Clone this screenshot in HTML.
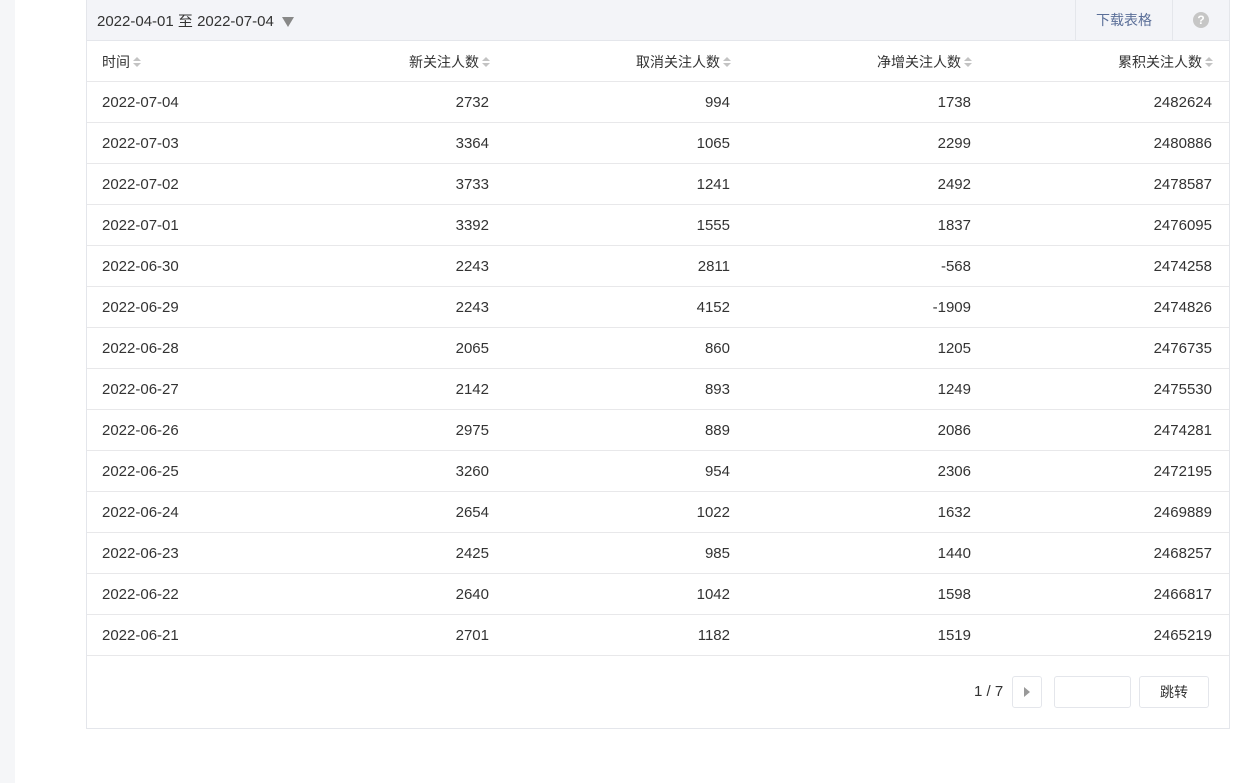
<!DOCTYPE html>
<html><head><meta charset="utf-8"><style>
*{margin:0;padding:0;box-sizing:border-box}
body{width:1257px;height:783px;background:#fff;font-family:"Liberation Sans","Noto Sans CJK SC",sans-serif;font-size:14px;color:#333;position:relative;overflow:hidden}
.strip{position:absolute;left:0;top:0;width:15px;height:783px;background:#f5f6f8}
.box{position:absolute;left:86px;top:0;width:1144px;height:729px;border:1px solid #e4e6eb;border-top:none}
.bar{height:41px;background:#f3f4f8;border-bottom:1px solid #e4e6eb;position:relative}
.date{position:absolute;left:10px;top:10px;font-size:15px;color:#333}
.tri{display:inline-block;width:0;height:0;border-left:6px solid transparent;border-right:6px solid transparent;border-top:10px solid #888;margin-left:8px;vertical-align:-1px}
.dl{position:absolute;left:988px;top:0;width:98px;height:40px;border-left:1px solid #e4e6eb;border-right:1px solid #e4e6eb;text-align:center;line-height:40px;color:#5a6e98;font-size:14px}
.q{position:absolute;left:1106px;top:12px;width:16px;height:16px;border-radius:50%;background:#c6c6c6;color:#fff;font-size:12px;font-weight:bold;text-align:center;line-height:16px}
table{border-collapse:collapse;width:1142px;table-layout:fixed}
td,th{height:41px;border-bottom:1px solid #e8e8ea;text-align:right;padding:2px 17px 0 0;font-weight:normal;font-size:15px;color:#333}
th{font-size:14px;height:40px;padding-right:16px}
td:first-child,th:first-child{text-align:left;padding-left:15px}
.s{display:inline-block;width:8px;height:11px;position:relative;margin-left:3px;vertical-align:-1px}
.s:before{content:"";position:absolute;left:0;top:0;border-left:4px solid transparent;border-right:4px solid transparent;border-bottom:4px solid #c3c3c3}
.s:after{content:"";position:absolute;left:0;top:6px;border-left:4px solid transparent;border-right:4px solid transparent;border-top:4px solid #c3c3c3}
.pg{position:absolute;top:676px;height:32px}
</style></head><body>
<div class="strip"></div>
<div class="box">
<div class="bar"><span class="date">2022-04-01 至 2022-07-04<span class="tri"></span></span><div class="dl">下载表格</div><div class="q">?</div></div>
<table>
<colgroup><col style="width:178px"><col style="width:241px"><col style="width:241px"><col style="width:241px"><col style="width:241px"></colgroup>
<tr><th>时间<span class="s"></span></th><th>新关注人数<span class="s"></span></th><th>取消关注人数<span class="s"></span></th><th>净增关注人数<span class="s"></span></th><th>累积关注人数<span class="s"></span></th></tr>
<tr><td>2022-07-04</td><td>2732</td><td>994</td><td>1738</td><td>2482624</td></tr>
<tr><td>2022-07-03</td><td>3364</td><td>1065</td><td>2299</td><td>2480886</td></tr>
<tr><td>2022-07-02</td><td>3733</td><td>1241</td><td>2492</td><td>2478587</td></tr>
<tr><td>2022-07-01</td><td>3392</td><td>1555</td><td>1837</td><td>2476095</td></tr>
<tr><td>2022-06-30</td><td>2243</td><td>2811</td><td>-568</td><td>2474258</td></tr>
<tr><td>2022-06-29</td><td>2243</td><td>4152</td><td>-1909</td><td>2474826</td></tr>
<tr><td>2022-06-28</td><td>2065</td><td>860</td><td>1205</td><td>2476735</td></tr>
<tr><td>2022-06-27</td><td>2142</td><td>893</td><td>1249</td><td>2475530</td></tr>
<tr><td>2022-06-26</td><td>2975</td><td>889</td><td>2086</td><td>2474281</td></tr>
<tr><td>2022-06-25</td><td>3260</td><td>954</td><td>2306</td><td>2472195</td></tr>
<tr><td>2022-06-24</td><td>2654</td><td>1022</td><td>1632</td><td>2469889</td></tr>
<tr><td>2022-06-23</td><td>2425</td><td>985</td><td>1440</td><td>2468257</td></tr>
<tr><td>2022-06-22</td><td>2640</td><td>1042</td><td>1598</td><td>2466817</td></tr>
<tr><td>2022-06-21</td><td>2701</td><td>1182</td><td>1519</td><td>2465219</td></tr>
</table>
</div>
<div class="pg" style="left:974px;line-height:32px;color:#333;font-size:15px">1 / 7</div>
<div class="pg" style="left:1012px;width:30px;border:1px solid #e4e6eb;border-radius:3px"><span style="position:absolute;left:11px;top:10px;border-top:5px solid transparent;border-bottom:5px solid transparent;border-left:6px solid #999"></span></div>
<div class="pg" style="left:1054px;width:77px;border:1px solid #e4e6eb;border-radius:3px"></div>
<div class="pg" style="left:1139px;width:70px;border:1px solid #e4e6eb;border-radius:3px;text-align:center;line-height:30px;font-size:14px">跳转</div>
</body></html>
